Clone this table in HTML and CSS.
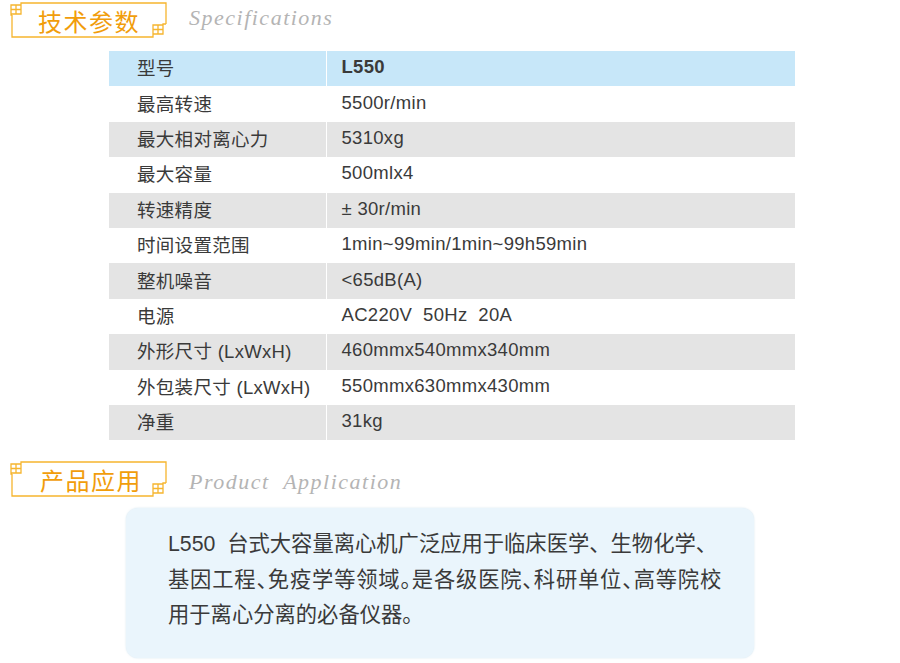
FILE: index.html
```html
<!DOCTYPE html>
<html lang="zh-CN">
<head>
<meta charset="utf-8">
<title>L550 技术参数</title>
<link rel="stylesheet" href="styles.css">
</head>
<body>
<section class="section">
  <header class="heading">
    <div class="badge">
      <svg class="frame" width="160" height="40" viewBox="0 0 160 40" aria-hidden="true">
        <g fill="none" stroke="#f6b52e" stroke-width="1.3">
          <path d="M19 3H158V24"/>
          <path d="M4 15V37H140"/>
          <path d="M3 5H13V14H3Z M3 9.5H13 M8 5V14 M13 5V3H19 M3 14V15H4"/>
          <path d="M145 25H155V34H145Z M145 29.5H155 M150 25V34 M145 34V37H140 M155 25V24H158"/>
        </g>
      </svg>
      <h2 class="badge-title">技术参数</h2>
    </div>
    <span class="heading-en">Specifications</span>
  </header>

  <table class="specs">
    <tbody>
      <tr class="head"><td>型号</td><td class="model">L550</td></tr>
      <tr><td>最高转速</td><td>5500r/min</td></tr>
      <tr class="alt"><td>最大相对离心力</td><td>5310xg</td></tr>
      <tr><td>最大容量</td><td>500mlx4</td></tr>
      <tr class="alt"><td>转速精度</td><td>± 30r/min</td></tr>
      <tr><td>时间设置范围</td><td>1min~99min/1min~99h59min</td></tr>
      <tr class="alt"><td>整机噪音</td><td>&lt;65dB(A)</td></tr>
      <tr><td>电源</td><td>AC220V&nbsp;&nbsp;50Hz&nbsp;&nbsp;20A</td></tr>
      <tr class="alt"><td>外形尺寸 (LxWxH)</td><td>460mmx540mmx340mm</td></tr>
      <tr><td>外包装尺寸 (LxWxH)</td><td>550mmx630mmx430mm</td></tr>
      <tr class="alt"><td>净重</td><td>31kg</td></tr>
    </tbody>
  </table>
</section>

<section class="section app">
  <header class="heading">
    <div class="badge">
      <svg class="frame" width="160" height="40" viewBox="0 0 160 40" aria-hidden="true">
        <g fill="none" stroke="#f6b52e" stroke-width="1.3">
          <path d="M19 3H158V24"/>
          <path d="M4 15V37H140"/>
          <path d="M3 5H13V14H3Z M3 9.5H13 M8 5V14 M13 5V3H19 M3 14V15H4"/>
          <path d="M145 25H155V34H145Z M145 29.5H155 M150 25V34 M145 34V37H140 M155 25V24H158"/>
        </g>
      </svg>
      <h2 class="badge-title">产品应用</h2>
    </div>
    <span class="heading-en">Product&nbsp; Application</span>
  </header>

  <div class="app-box">
    <p class="app-text">L550&nbsp; 台式大容量离心机广泛应用于临床医学、生物化学、<br><span class="tight">基因工程、免疫学等领域。是各级医院、科研单位、高等院校</span><br>用于离心分离的必备仪器。</p>
  </div>
</section>
</body>
</html>
```

FILE: styles.css
```css
html, body {
  margin: 0;
  padding: 0;
  background: #ffffff;
}

body {
  width: 900px;
  height: 663px;
  overflow: hidden;
  font-family: "Liberation Sans", "Noto Sans CJK SC", sans-serif;
  color: #3a3a3a;
}

.heading {
  display: flex;
  align-items: center;
  height: 40px;
  padding-left: 8px;
}

.badge {
  position: relative;
  width: 160px;
  height: 40px;
  display: flex;
  align-items: center;
}

.frame {
  position: absolute;
  left: 0;
  top: 0;
}

.badge-title {
  margin: 0 0 0 30px;
  font-family: "Noto Sans CJK SC", sans-serif;
  font-weight: 400;
  font-size: 24px;
  letter-spacing: 1.5px;
  line-height: 40px;
  color: #f19d0b;
  position: relative;
  top: 1px;
}

.heading-en {
  margin-left: 21px;
  font-family: "Liberation Serif", serif;
  font-style: italic;
  font-size: 22px;
  letter-spacing: 1.5px;
  color: #b4b4b4;
  position: relative;
  top: -2px;
}

.specs {
  margin: 11px 0 0 109px;
  width: 686px;
  border-collapse: collapse;
  font-size: 18.5px;
  letter-spacing: 0.3px;
}

.specs tr {
  height: 35.4px;
}

.specs td {
  padding: 0 0 3px 0;
  vertical-align: middle;
  white-space: nowrap;
}

.specs td:first-child {
  width: 217px;
  padding-left: 28px;
  box-sizing: border-box;
  border-right: 1px solid #ffffff;
}

.specs td:last-child {
  padding-left: 15px;
}

.specs tr.head td {
  background: #c7e7f9;
}

.specs tr.alt td {
  background: #e4e4e4;
}

.specs .model {
  font-weight: 700;
}

.app {
  margin-top: 19px;
}

.app .badge-title {
  margin-left: 32px;
}

.app .heading-en {
  top: 3px;
}

.app-box {
  margin: 9px 0 0 126px;
  width: 628px;
  height: 150px;
  box-sizing: border-box;
  padding: 19px 0 0 42px;
  background: #eaf5fc;
  border-radius: 12px;
  box-shadow: 0 0 2px rgba(200, 222, 235, 0.8);
}

.app-text {
  margin: 0;
  font-size: 21.3px;
  line-height: 35.5px;
  white-space: nowrap;
  color: #3a3a3a;
}

.tight {
  font-feature-settings: "halt";
  letter-spacing: 0.8px;
}
```
